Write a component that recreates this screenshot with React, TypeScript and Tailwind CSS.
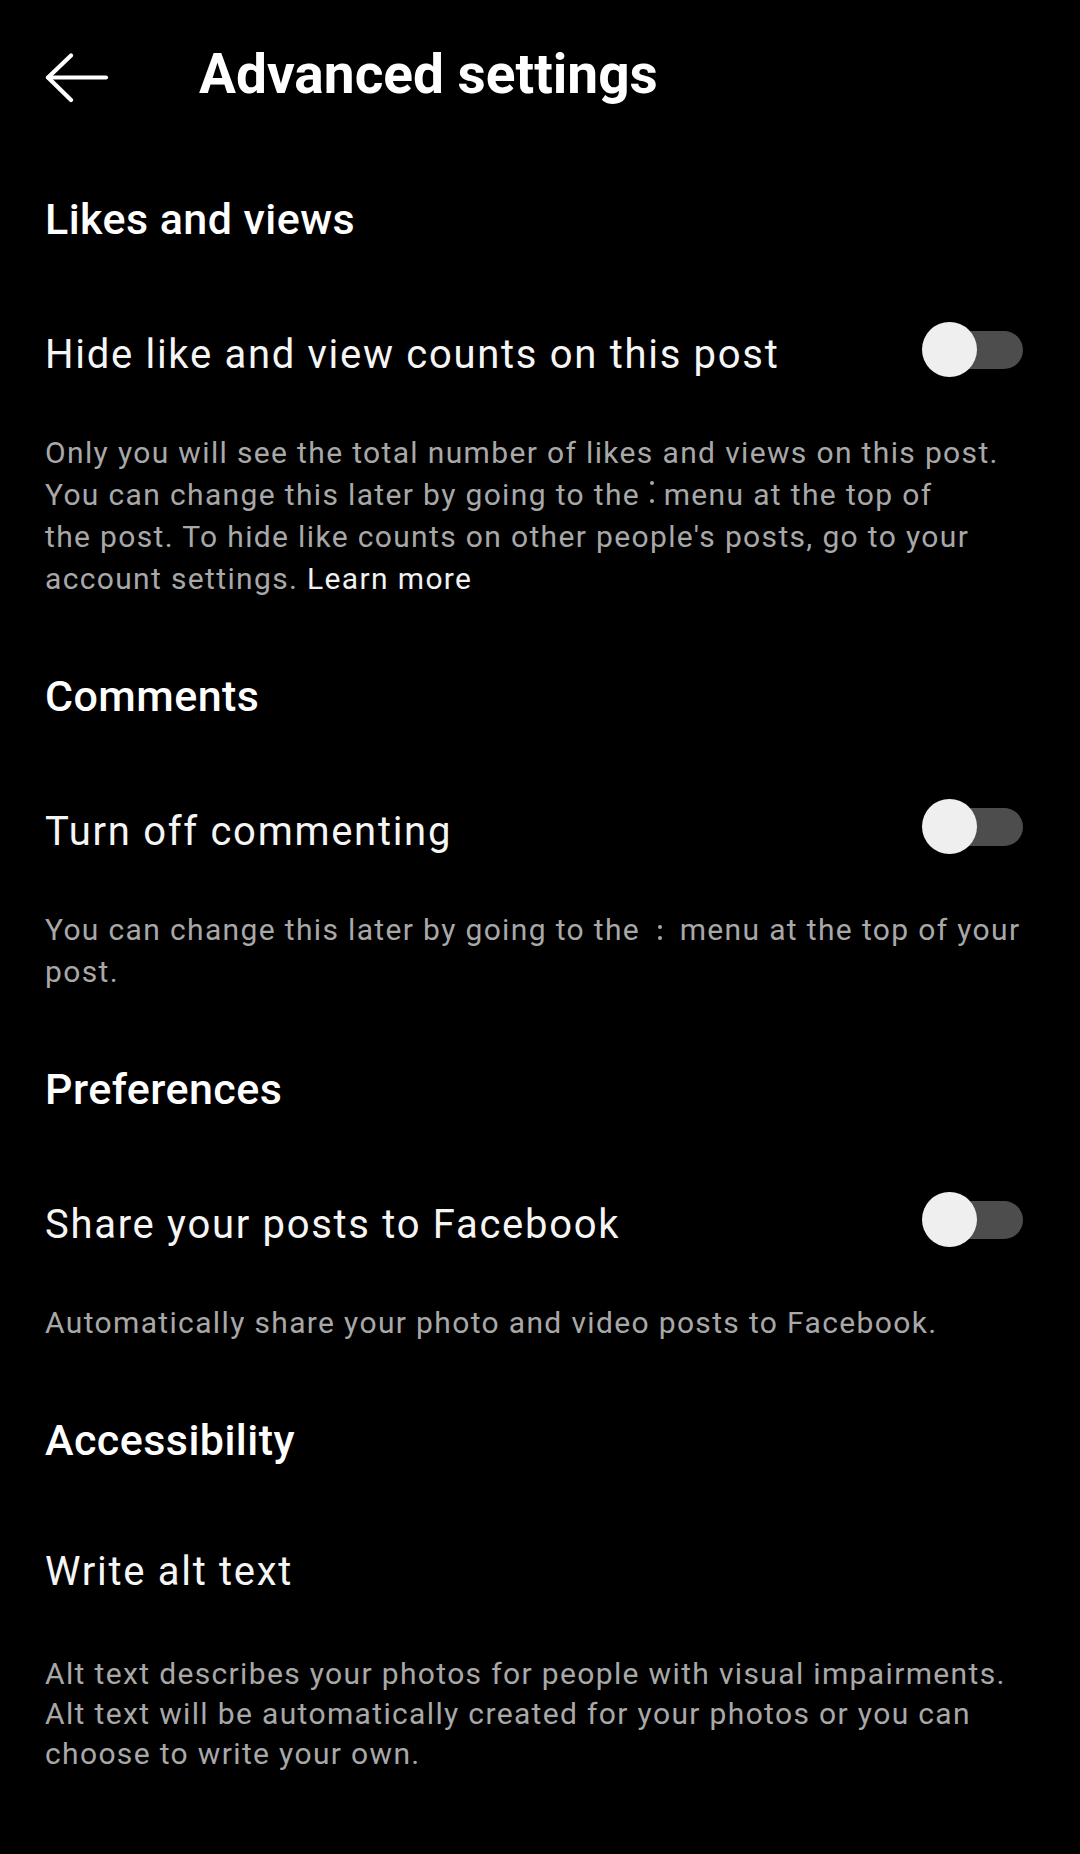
import React from "react";

function Toggle() {
  return (
    <div className="relative w-[101px] h-[55px] shrink-0 -translate-y-[5px]">
      <div className="absolute left-[13px] top-[8.5px] w-[88px] h-[38px] rounded-full bg-[#4d4d4d]" />
      <div className="absolute left-0 top-0 w-[55px] h-[55px] rounded-full bg-[#efefef]" />
    </div>
  );
}

function Dots({ variant }: { variant: "tall" | "short" }) {
  if (variant === "tall") {
    return (
      <svg width="6" height="26" viewBox="0 0 6 26" className="inline-block align-baseline">
        <circle cx="3" cy="4" r="2" fill="#a8a8a8" />
        <circle cx="3" cy="22" r="2" fill="#a8a8a8" />
      </svg>
    );
  }
  return (
    <svg width="6" height="16" viewBox="0 0 6 16" className="inline-block align-baseline mx-[8px]">
      <circle cx="3" cy="3" r="2" fill="#a8a8a8" />
      <circle cx="3" cy="14" r="2" fill="#a8a8a8" />
    </svg>
  );
}

function SectionHead({ children, first }: { children: React.ReactNode; first?: boolean }) {
  return (
    <div
      className={
        (first ? "mt-[90px] " : "mt-[70px] ") +
        "text-[43px] leading-[52px] font-medium tracking-[0.45px] text-white"
      }
    >
      {children}
    </div>
  );
}

function RowTitle({ children, toggle }: { children: React.ReactNode; toggle?: boolean }) {
  return (
    <div className="mt-[82px] flex items-center justify-between pr-[12px]">
      <div className="text-[40px] leading-[48px] tracking-[1.7px] text-[#f5f5f5]">{children}</div>
      {toggle && <Toggle />}
    </div>
  );
}

function Desc({ children, last }: { children: React.ReactNode; last?: boolean }) {
  return (
    <div
      className={
        (last ? "mt-[58px] leading-[40px] " : "mt-[50px] leading-[42px] ") +
        "text-[30px] tracking-[1.35px] text-[#a8a8a8] whitespace-nowrap"
      }
    >
      {children}
    </div>
  );
}

export default function App() {
  return (
    <div
      className="w-[1080px] h-[1854px] bg-black text-white px-[45px] overflow-hidden"
      style={{ fontFamily: "Roboto, 'Noto Sans', sans-serif" }}
    >
      <div className="flex items-start pt-[45px]">
        <svg
          width="64"
          height="50"
          viewBox="0 0 64 50"
          fill="none"
          stroke="white"
          strokeWidth="4.2"
          strokeLinecap="round"
          strokeLinejoin="round"
          className="mt-[8px] shrink-0"
        >
          <path d="M3 24.5 H61" />
          <path d="M26 2.5 L3 24.5 L26 47" />
        </svg>
        <div className="ml-[90px] text-[55px] leading-[58px] font-bold text-white">
          Advanced settings
        </div>
      </div>

      <SectionHead first>Likes and views</SectionHead>
      <RowTitle toggle>Hide like and view counts on this post</RowTitle>
      <Desc>
        Only you will see the total number of likes and views on this post.
        <br />
        You can change this later by going to the <Dots variant="tall" /> menu at the top of
        <br />
        the post. To hide like counts on other people's posts, go to your
        <br />
        account settings. <span className="text-[#f2f2f2]">Learn more</span>
      </Desc>

      <SectionHead>Comments</SectionHead>
      <RowTitle toggle>Turn off commenting</RowTitle>
      <Desc>
        You can change this later by going to the <Dots variant="short" /> menu at the top of your
        <br />
        post.
      </Desc>

      <SectionHead>Preferences</SectionHead>
      <RowTitle toggle>Share your posts to Facebook</RowTitle>
      <Desc>Automatically share your photo and video posts to Facebook.</Desc>

      <SectionHead>Accessibility</SectionHead>
      <RowTitle>Write alt text</RowTitle>
      <Desc last>
        Alt text describes your photos for people with visual impairments.
        <br />
        Alt text will be automatically created for your photos or you can
        <br />
        choose to write your own.
      </Desc>
    </div>
  );
}
